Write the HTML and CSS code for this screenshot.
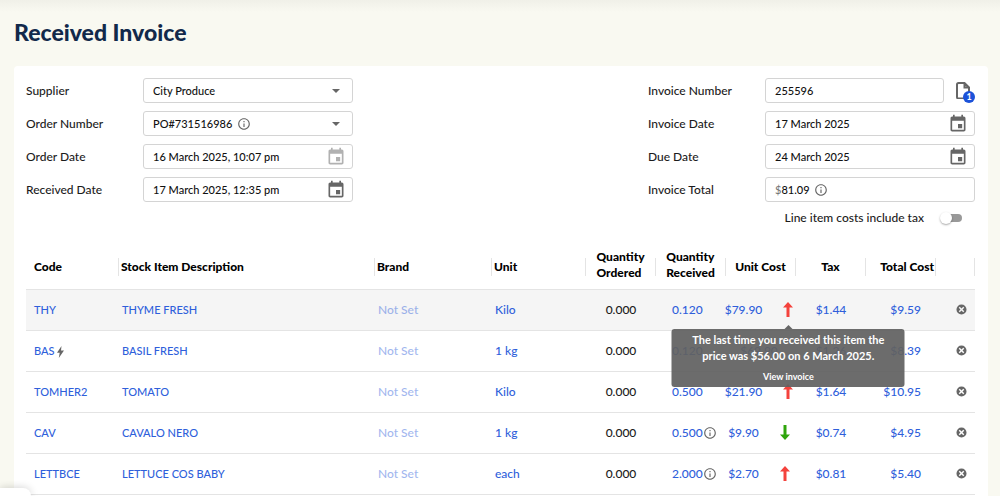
FILE: index.html
```
<!DOCTYPE html>
<html lang="en">
<head>
  <meta charset="UTF-8">
  <meta name="viewport" content="width=device-width, initial-scale=1.0">
  <title>Received Invoice</title>
  <link rel="stylesheet" href="styles.css">
</head>
<body>
  <!-- shared icons -->
  <svg class="sprite" aria-hidden="true">
    <symbol id="info" viewBox="0 0 24 24"><path d="M11 7h2v2h-2zm0 4h2v6h-2zm1-9C6.48 2 2 6.48 2 12s4.48 10 10 10 10-4.48 10-10S17.52 2 12 2zm0 18c-4.41 0-8-3.59-8-8s3.59-8 8-8 8 3.59 8 8-3.59 8-8 8z"/></symbol>
    <symbol id="calendar" viewBox="0 0 24 24"><path d="M17 12h-5v5h5v-5zM16 1v2H8V1H6v2H5c-1.11 0-1.99.9-1.99 2L3 19c0 1.1.89 2 2 2h14c1.1 0 2-.9 2-2V5c0-1.1-.9-2-2-2h-1V1h-2zm3 18H5V8h14v11z"/></symbol>
    <symbol id="caret" viewBox="0 0 10 5"><path d="M0 0h10L5 5z"/></symbol>
    <symbol id="remove" viewBox="0 0 24 24"><path d="M12 1a11 11 0 1 0 0 22 11 11 0 0 0 0-22zm6 14.8L15.8 18 12 14.2 8.2 18 6 15.8 9.8 12 6 8.2 8.2 6 12 9.8 15.8 6 18 8.2 14.2 12z"/></symbol>
    <symbol id="arrow" viewBox="0 0 10 15"><path d="M5 0l5 5.5H6.5V15h-3V5.500H0z"/></symbol>
    <symbol id="bolt" viewBox="0 0 7 12"><path d="M4.500 0L0 6.800h2.700L1.800 12 7 4.600H4z"/></symbol>
  </svg>

  <main class="page">
    <h1>Received Invoice</h1>

    <section class="panel">
      <form class="details">
        <div class="group">
          <label for="supplier">Supplier</label>
          <div class="field">
            <select id="supplier"><option>City Produce</option></select>
            <svg class="caret"><use href="#caret"/></svg>
          </div>

          <label for="order-number">Order Number</label>
          <div class="field">
            <select id="order-number"><option>PO#731516986</option></select>
            <svg class="info"><use href="#info"/></svg>
            <svg class="caret"><use href="#caret"/></svg>
          </div>

          <label for="order-date">Order Date</label>
          <div class="field">
            <input id="order-date" type="text" value="16 March 2025, 10:07 pm">
            <button type="button" class="pick" aria-label="Pick order date" disabled><svg><use href="#calendar"/></svg></button>
          </div>

          <label for="received-date">Received Date</label>
          <div class="field">
            <input id="received-date" type="text" value="17 March 2025, 12:35 pm">
            <button type="button" class="pick" aria-label="Pick received date"><svg><use href="#calendar"/></svg></button>
          </div>
        </div>

        <div class="group">
          <label for="invoice-number">Invoice Number</label>
          <div class="with-file">
            <div class="field"><input id="invoice-number" type="text" value="255596"></div>
            <button type="button" class="file" aria-label="Attachments">
              <svg viewBox="0 0 14 17"><path d="M2.500 1h6L13 5.500v9.500a1.500 1.500 0 0 1-1.500 1.500h-9A1.500 1.500 0 0 1 1 15V2.500A1.500 1.500 0 0 1 2.500 1zM8.500 1v4.500H13"/></svg>
              <span class="count">1</span>
            </button>
          </div>

          <label for="invoice-date">Invoice Date</label>
          <div class="field">
            <input id="invoice-date" type="text" value="17 March 2025">
            <button type="button" class="pick" aria-label="Pick invoice date"><svg><use href="#calendar"/></svg></button>
          </div>

          <label for="due-date">Due Date</label>
          <div class="field">
            <input id="due-date" type="text" value="24 March 2025">
            <button type="button" class="pick" aria-label="Pick due date"><svg><use href="#calendar"/></svg></button>
          </div>

          <label for="invoice-total">Invoice Total</label>
          <div class="field">
            <span class="currency">$</span>
            <input id="invoice-total" class="amount" type="text" value="81.09">
            <svg class="info"><use href="#info"/></svg>
          </div>

          <div class="tax-toggle">
            <label for="include-tax">Line item costs include tax</label>
            <input id="include-tax" class="switch" type="checkbox">
          </div>
        </div>
      </form>

      <table class="items">
        <colgroup>
          <col class="c-code"><col><col class="c-brand"><col class="c-unit">
          <col class="c-num"><col class="c-num"><col class="c-num"><col class="c-num"><col class="c-num">
          <col class="c-remove">
        </colgroup>
        <thead>
          <tr>
            <th><div>Code</div></th>
            <th><div>Stock Item Description</div></th>
            <th><div>Brand</div></th>
            <th><div>Unit</div></th>
            <th class="num"><div><span>Quantity<br>Ordered</span></div></th>
            <th class="num"><div><span>Quantity<br>Received</span></div></th>
            <th class="num"><div>Unit Cost</div></th>
            <th class="num"><div>Tax</div></th>
            <th class="total"><div>Total Cost</div></th>
            <th><div></div></th>
          </tr>
        </thead>
        <tbody>
          <tr class="active">
            <td class="name"><a href="#">THY</a></td>
            <td class="name"><a href="#">THYME FRESH</a></td>
            <td><a href="#" class="unset">Not Set</a></td>
            <td><a href="#">Kilo</a></td>
            <td class="num">0.000</td>
            <td class="received"><a href="#">0.120</a></td>
            <td><div class="cost">
              <a href="#">$79.90</a>
              <span class="trend">
                <svg class="up"><use href="#arrow"/></svg>
                <span class="tooltip" role="tooltip">
                  <span>The last time you received this item the price was $56.00 on 6 March 2025.</span>
                  <a href="#">View invoice</a>
                </span>
              </span>
            </div></td>
            <td class="num"><a href="#">$1.44</a></td>
            <td class="total"><a href="#">$9.59</a></td>
            <td><button type="button" class="remove" aria-label="Remove THY"><svg><use href="#remove"/></svg></button></td>
          </tr>
          <tr>
            <td class="name"><a href="#">BAS</a> <svg class="bolt"><use href="#bolt"/></svg></td>
            <td class="name"><a href="#">BASIL FRESH</a></td>
            <td><a href="#" class="unset">Not Set</a></td>
            <td><a href="#">1 kg</a></td>
            <td class="num">0.000</td>
            <td class="received"><a href="#">0.120</a></td>
            <td><div class="cost"><a href="#">$69.90</a></div></td>
            <td class="num"><a href="#">$1.26</a></td>
            <td class="total"><a href="#">$8.39</a></td>
            <td><button type="button" class="remove" aria-label="Remove BAS"><svg><use href="#remove"/></svg></button></td>
          </tr>
          <tr>
            <td class="name"><a href="#">TOMHER2</a></td>
            <td class="name"><a href="#">TOMATO</a></td>
            <td><a href="#" class="unset">Not Set</a></td>
            <td><a href="#">Kilo</a></td>
            <td class="num">0.000</td>
            <td class="received"><a href="#">0.500</a></td>
            <td><div class="cost"><a href="#">$21.90</a><span class="trend"><svg class="up"><use href="#arrow"/></svg></span></div></td>
            <td class="num"><a href="#">$1.64</a></td>
            <td class="total"><a href="#">$10.95</a></td>
            <td><button type="button" class="remove" aria-label="Remove TOMHER2"><svg><use href="#remove"/></svg></button></td>
          </tr>
          <tr>
            <td class="name"><a href="#">CAV</a></td>
            <td class="name"><a href="#">CAVALO NERO</a></td>
            <td><a href="#" class="unset">Not Set</a></td>
            <td><a href="#">1 kg</a></td>
            <td class="num">0.000</td>
            <td class="received"><a href="#">0.500</a><svg class="info"><use href="#info"/></svg></td>
            <td><div class="cost"><a href="#">$9.90</a><span class="trend"><svg class="down"><use href="#arrow"/></svg></span></div></td>
            <td class="num"><a href="#">$0.74</a></td>
            <td class="total"><a href="#">$4.95</a></td>
            <td><button type="button" class="remove" aria-label="Remove CAV"><svg><use href="#remove"/></svg></button></td>
          </tr>
          <tr>
            <td class="name"><a href="#">LETTBCE</a></td>
            <td class="name"><a href="#">LETTUCE COS BABY</a></td>
            <td><a href="#" class="unset">Not Set</a></td>
            <td><a href="#">each</a></td>
            <td class="num">0.000</td>
            <td class="received"><a href="#">2.000</a><svg class="info"><use href="#info"/></svg></td>
            <td><div class="cost"><a href="#">$2.70</a><span class="trend"><svg class="up"><use href="#arrow"/></svg></span></div></td>
            <td class="num"><a href="#">$0.81</a></td>
            <td class="total"><a href="#">$5.40</a></td>
            <td><button type="button" class="remove" aria-label="Remove LETTBCE"><svg><use href="#remove"/></svg></button></td>
          </tr>
        </tbody>
      </table>
    </section>
  </main>

  <div class="drawer-tab"></div>
</body>
</html>
```
FILE: styles.css
```
* {
  box-sizing: border-box;
}
body {
  margin: 0;
  font-family: Lato, 'Open Sans', sans-serif;
  font-size: 12px;
  font-weight: 500;
  line-height: 16px;
  color: #1c1c1c;
  background-color: #f9f9f1;
}
svg {
  display: block;
  fill: #666;
}
a {
  color: #2f5fdb;
  text-decoration: none;
}
button {
  padding: 0;
  border: 0;
  background: none;
  cursor: pointer;
}
.sprite {
  display: none;
}
.page {
  display: flex;
  flex-direction: column;
  min-height: 100vh;
  padding: 18px 12px 0 14px;
  background: linear-gradient(#f0f0e8, #f9f9f1 12px);
}
h1 {
  margin: 0 0 20px;
  font-size: 23px;
  font-weight: 900;
  line-height: 28px;
  color: #12294b;
}
.panel {
  flex: 1;
  padding: 12px 13px 0 12px;
  background-color: white;
  border-radius: 4px 4px 0 0;
}

/* invoice details */
.details {
  display: flex;
  justify-content: space-between;
  gap: 24px;
}
.group {
  display: grid;
  grid-template-columns: 117px minmax(0, 210px);
  grid-template-rows: repeat(4, 25px);
  grid-auto-rows: 16px;
  gap: 8px 0;
  align-items: center;
}
.field {
  display: flex;
  flex: 1;
  align-items: center;
  min-width: 0;
  height: 25px;
  padding: 0 6px 0 9px;
  background-color: white;
  border: 1px solid #d4d4d4;
  border-radius: 3px;
  font-size: 11px;
}
.field input,
.field select {
  min-width: 0;
  padding: 0;
  border: 0;
  outline: 0;
  background: none;
  appearance: none;
  font: inherit;
  color: #111;
}
.field input {
  flex: 1;
}
.field .amount {
  flex: none;
  width: 33px;
}
.currency {
  color: #777;
}
.caret {
  width: 8px;
  height: 4px;
  margin-left: auto;
  margin-right: 6px;
}
.info {
  width: 14px;
  height: 14px;
}
.field select + .info {
  margin-left: 4px;
}
.pick svg {
  width: 20px;
  height: 20px;
}
.pick:disabled {
  opacity: 0.5;
}
.with-file {
  display: flex;
  gap: 12px;
}
.file {
  position: relative;
  width: 19px;
}
.file svg {
  width: 14px;
  height: 17px;
  fill: none;
  stroke: #666;
  stroke-width: 2;
}
.count {
  position: absolute;
  right: 0;
  bottom: 0;
  width: 12px;
  height: 12px;
  border-radius: 50%;
  background-color: #1c52d9;
  color: white;
  font: bold 9px/12px Lato, sans-serif;
}
.tax-toggle {
  grid-column: 1 / -1;
  display: flex;
  align-items: center;
  justify-content: flex-end;
  gap: 18px;
  padding-right: 13px;
}
.switch {
  position: relative;
  width: 20px;
  height: 8px;
  margin: 0;
  appearance: none;
  background-color: #999;
  border-radius: 4px;
}
.switch::before {
  content: '';
  position: absolute;
  top: -2px;
  left: -2px;
  width: 12px;
  height: 12px;
  border-radius: 50%;
  background-color: white;
  box-shadow: 0 1px 2px rgba(0, 0, 0, 0.35);
}

/* line items */
.items {
  width: 100%;
  margin-top: 20px;
  border-collapse: collapse;
  table-layout: fixed;
}
.c-code {
  width: 93px;
}
.c-brand {
  width: 117px;
}
.c-unit {
  width: 94px;
}
.c-num {
  width: 70px;
}
.c-remove {
  width: 39px;
}
th {
  height: 43px;
  padding: 0;
  border-bottom: 1px solid #e4e4e4;
  font-weight: 900;
  color: black;
  text-align: left;
}
th div {
  display: flex;
  align-items: center;
  height: 18px;
  padding-left: 2px;
  border-right: 1px solid #e4e4e4;
}
th.num div {
  justify-content: center;
  padding-left: 0;
}
th.num span {
  padding-bottom: 4px;
}
th.total div {
  justify-content: flex-end;
  padding-right: 1px;
}
td {
  height: 41px;
  padding: 0 0 0 3px;
  border-bottom: 1px solid #e4e4e4;
}
th:first-child div,
td:first-child {
  padding-left: 8px;
}
td.name {
  font-size: 11px;
}
td.num {
  padding: 0;
  text-align: center;
}
td.total {
  padding: 0 15px 0 0;
  text-align: right;
}
.active {
  background-color: #f5f5f5;
}
.unset {
  opacity: 0.45;
}
td.received {
  padding-left: 16px;
  white-space: nowrap;
}
.received .info,
.bolt {
  display: inline-block;
  vertical-align: -3px;
}
.bolt {
  width: 7px;
  height: 12px;
}
.cost {
  display: flex;
  align-items: center;
  justify-content: center;
  gap: 21px;
  padding-right: 7px;
}
.trend {
  position: relative;
}
.trend svg {
  width: 10px;
  height: 15px;
}
.up {
  fill: #f4423c;
}
.down {
  fill: #2fa50c;
  transform: rotate(180deg);
}
.remove {
  display: block;
  margin-left: 17px;
}
.remove svg {
  width: 11px;
  height: 11px;
}
.tooltip {
  position: absolute;
  z-index: 1;
  top: 27px;
  left: 50%;
  width: 233px;
  padding: 3px 16px;
  transform: translateX(-50%);
  border-radius: 3px;
  background-color: rgba(97, 97, 97, 0.93);
  color: white;
  font-size: 11px;
  font-weight: bold;
  text-align: center;
}
.tooltip::before {
  content: '';
  position: absolute;
  top: -4px;
  left: 50%;
  margin-left: -4px;
  border: 4px solid transparent;
  border-top: 0;
  border-bottom-color: #666;
}
.tooltip a {
  display: block;
  margin-top: 6px;
  font-size: 9px;
  line-height: 14px;
  color: white;
}

/* corner of the collapsed drawer */
.drawer-tab {
  position: fixed;
  left: 0;
  bottom: 0;
  width: 31px;
  height: 8px;
  border-radius: 0 8px 0 0;
  background-color: white;
  box-shadow: 0 0 8px rgba(0, 0, 0, 0.2);
}
```
